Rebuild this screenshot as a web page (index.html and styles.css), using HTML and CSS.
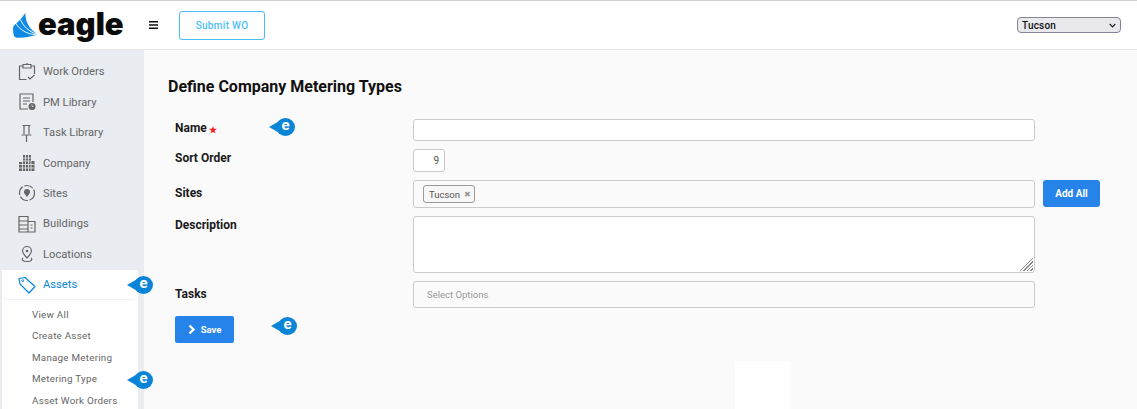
FILE: index.html
```html
<!DOCTYPE html>
<html lang="en">
<head>
<meta charset="utf-8">
<title>Define Company Metering Types</title>
<link rel="stylesheet" href="styles.css">
</head>
<body>
<header class="topbar">
  <div class="logo">
    <svg class="logo-mark" viewBox="0 0 25 25" width="25" height="25"><path d="M12.500 0C8 6 5 9 .5 13C-.3 16 0 20 1 23C2 24.500 4 25 6 24.800C13 24.500 19 23.500 25 21.500C17 17 12 9 12.500 0Z" fill="#0f8ae6"/><path d="M7.500 6.500C10 13 16 19 25 21.500" fill="none" stroke="#fff" stroke-width="1"/><path d="M3 10.500C6 16 14 22 25 21.800" fill="none" stroke="#fff" stroke-width=".9"/></svg>
    <span class="logo-text">eagle</span>
  </div>
  <svg class="burger" viewBox="0 0 9 8" width="9" height="8"><path d="M0 .75h9M0 4h9M0 7.250h9" stroke="#111" stroke-width="1.300"/></svg>
  <button class="submit-wo" type="button">Submit WO</button>
  <select class="site-select"><option>Tucson</option></select>
</header>
<div class="shell">
  <nav class="sidebar">
    <a class="nav-item">
      <svg class="nav-icon" viewBox="0 0 18 18"><path d="M5 3H1.500v13.500h7M13 3h3.500v8M5 1.500h8V5H5zM8 1.500c0-1 2-1 2 0M10 14l2 2 4.500-4" fill="none" stroke="#666" stroke-width="1.200"/></svg>
      <span>Work Orders</span>
    </a>
    <a class="nav-item">
      <svg class="nav-icon" viewBox="0 0 18 18"><path d="M10 16H2V1h13v8M5 5h7M5 8h7M5 11h4" fill="none" stroke="#666" stroke-width="1.200"/><circle cx="14" cy="13.500" r="3.500" fill="#666"/><path d="M14 11.500v2h1.500" fill="none" stroke="#e9ecf1" stroke-width=".8"/></svg>
      <span>PM Library</span>
    </a>
    <a class="nav-item">
      <svg class="nav-icon" viewBox="0 0 18 18"><path d="M4.500 1.500h8M6 1.500v8.500M11 1.500v8.500M3.500 11h10M8.500 11v7" fill="none" stroke="#666" stroke-width="1.200"/></svg>
      <span>Task Library</span>
    </a>
    <a class="nav-item">
      <svg class="nav-icon" viewBox="0 0 18 18"><path d="M5 1h8v6h3.500v10H1V8h4z" fill="#666"/><path d="M7.500 1v16M10.500 1v16M5 4h8M5 7h8M1 10.500h15.500M1 14h15.500M4.500 8v9M13 7v10" stroke="#e9ecf1" stroke-width=".8"/></svg>
      <span>Company</span>
    </a>
    <a class="nav-item">
      <svg class="nav-icon" viewBox="0 0 18 18"><circle cx="9" cy="9" r="7.500" fill="none" stroke="#666" stroke-width="1.200" stroke-dasharray="9 1.800"/><path d="M9 13C7.500 11 6 9.500 6 8a3 3 0 0 1 6 0c0 1.500-1.500 3-3 5z" fill="#666"/></svg>
      <span>Sites</span>
    </a>
    <a class="nav-item">
      <svg class="nav-icon" viewBox="0 0 18 18"><path d="M1 1.500h9V17H1zM10 6.500h7V17h-7zM1 6h9M1 10h9M1 14h9M12.500 10h2M12.500 13h2" fill="none" stroke="#666" stroke-width="1.200"/></svg>
      <span>Buildings</span>
    </a>
    <a class="nav-item">
      <svg class="nav-icon" viewBox="0 0 18 18"><path d="M9 13C7 10.500 4.500 8.500 4.500 6a4.500 4.500 0 0 1 9 0c0 2.500-2.500 4.500-4.500 7z" fill="none" stroke="#666" stroke-width="1.200"/><circle cx="9" cy="6" r="1.300" fill="#666"/><path d="M5 13c-2 2 0 3.500 4 3.500s6-1.500 4-3.500" fill="none" stroke="#666" stroke-width="1.200"/></svg>
      <span>Locations</span>
    </a>
    <div class="nav-group">
      <a class="nav-item nav-active">
        <svg class="nav-icon" viewBox="0 0 18 18"><path d="M1 2.500 7 1.500 17 10.500 11 17 2 8z" fill="none" stroke="#0a84d6" stroke-width="1.200" stroke-linejoin="round"/><circle cx="4.700" cy="4.700" r="1" fill="none" stroke="#0a84d6"/></svg>
        <span>Assets</span>
      </a>
      <ul class="sub-nav">
        <li>View All</li>
        <li>Create Asset</li>
        <li>Manage Metering</li>
        <li>Metering Type</li>
        <li>Asset Work Orders</li>
      </ul>
    </div>
    <span class="pin pin-assets">e</span>
    <span class="pin pin-type">e</span>
  </nav>
  <main class="content">
    <h1 class="title">Define Company Metering Types</h1>
    <form class="form">
      <label class="label label-name">Name <i class="req">★</i></label>
      <input class="field" type="text">
      <span></span>

      <label class="label label-sort">Sort Order</label>
      <input class="field field-num" type="text" value="9">
      <span></span>

      <label class="label label-sites">Sites</label>
      <div class="field field-box">
        <span class="chip">Tucson <b class="chip-x">✖</b></span>
      </div>
      <button class="btn-add" type="button">Add All</button>

      <label class="label label-desc">Description</label>
      <textarea class="field field-area"></textarea>
      <span></span>

      <label class="label label-tasks">Tasks</label>
      <div class="field field-box field-select">Select Options</div>
      <span></span>

      <button class="btn-save" type="button">
        <svg viewBox="0 0 8 10" width="8" height="11"><path d="M1.500 1 5.500 5l-4 4" fill="none" stroke="#fff" stroke-width="2.400"/></svg>
        Save
      </button>
    </form>
    <span class="pin pin-name">e</span>
    <span class="pin pin-save">e</span>
    <div class="white-box"></div>
  </main>
</div>
</body>
</html>
```
FILE: styles.css
```css
* { box-sizing: border-box; }
html, body { margin: 0; height: 409px; overflow: hidden; }
body { font-family: Roboto, "Liberation Sans", sans-serif; background: #fafafa; color: #111; }

.topbar {
  height: 50px;
  display: flex;
  align-items: center;
  background: #fff;
  border-top: 1px solid #cfcfcf;
  border-bottom: 1px solid #e6e6e6;
  padding: 0 16px 0 13px;
}
.logo { display: flex; align-items: flex-end; width: 136px; height: 26px; }
.logo-mark { flex: none; }
.logo-text {
  font-family: Inter, sans-serif;
  font-weight: 900;
  font-size: 31px;
  line-height: 26px;
  color: #0b0b0b;
  margin-bottom: 1px;
}
.burger { flex: none; margin-right: 21px; }
.submit-wo {
  width: 86px;
  height: 29px;
  background: #fff;
  border: 1px solid #45bdf5;
  border-radius: 3px;
  color: #4cc1f7;
  font: 500 10px Roboto, sans-serif;
  letter-spacing: .3px;
}
.site-select {
  margin-left: auto;
  width: 104px;
  height: 16px;
  padding: 0 0 0 4px;
  font: 500 10px Roboto, sans-serif;
  letter-spacing: .2px;
  color: #111;
  appearance: none;
  background: #e8e8ed url("data:image/svg+xml,%3Csvg xmlns='http://www.w3.org/2000/svg' width='7' height='5'%3E%3Cpath d='M.7 1 3.500 3.800 6.300 1' fill='none' stroke='%23222' stroke-width='1.200'/%3E%3C/svg%3E") no-repeat right 4px center;
  border: 1px solid #85859a;
  border-radius: 4px;
}

.shell { display: flex; height: 359px; overflow: hidden; }
.sidebar {
  position: relative;
  z-index: 1;
  width: 144px;
  flex: none;
  background: #e9ecf1;
  padding: 6.700px 6px 0 2px;
}
.nav-item {
  display: flex;
  align-items: center;
  height: 30.400px;
  padding-left: 16px;
  gap: 7px;
  font-size: 11.200px;
  color: #666;
}
.nav-icon { width: 18px; height: 18px; flex: none; }
.nav-group { background: #fff; height: 139px; margin-top: .7px; }
.nav-active { color: #0a84d6; height: 30px; border-bottom: 1px solid #eef0f4; border-radius: 0 0 6px 6px; }
.sub-nav { list-style: none; margin: 0; padding: 3.800px 0 0 30px; }
.sub-nav li {
  height: 21.500px;
  line-height: 21.500px;
  font-size: 9.800px;
  letter-spacing: .25px;
  color: #666;
}

.content { position: relative; flex: 1; padding: 27px 0 0 24px; background: #fafafa; }
.title { margin: 0 0 22px; font: 700 16px/20px Roboto, sans-serif; color: #111; }
.form {
  display: grid;
  grid-template-columns: 238px 622px 65px;
  row-gap: 8px;
  margin-left: 7px;
  align-items: start;
}
.label { font-size: 12px; font-weight: 700; color: #1a1a1a; line-height: 14px; }
.label-name { padding-top: 2px; }
.label-sort { padding-top: 2px; }
.label-sites { padding-top: 6px; }
.label-desc { padding-top: 2px; }
.label-tasks { padding-top: 6px; }
.req { font-style: normal; color: #f01f1f; font-size: 9px; vertical-align: -1px; margin-left: -1px; }
.field { display: block; width: 622px; border: 1px solid #cacaca; border-radius: 3px; background: #fff; }
input.field { height: 22px; }
.field-num { width: 32px; height: 23px !important; text-align: right; padding: 0 5px; font: 10px Roboto, sans-serif; color: #555; }
.field-box { height: 28px; background: #fafafa; display: flex; align-items: center; padding-left: 9px; }
.chip {
  display: inline-flex;
  align-items: center;
  gap: 4px;
  height: 18px;
  padding: 0 3px 0 5px;
  border: 1px solid #999;
  border-radius: 3px;
  background: #f7f7f7;
  font-size: 9.500px;
  color: #555;
}
.chip-x { font-size: 8px; color: #999; font-family: "DejaVu Sans", sans-serif; }
.field-area {
  height: 57px;
  resize: none;
  background: #fff linear-gradient(135deg,
    transparent 10px, #888 10px, #888 11px,
    transparent 11px, transparent 12.500px, #888 12.500px, #888 13.500px,
    transparent 13.500px, transparent 15px, #888 15px, #888 16px,
    transparent 16px, transparent 17.500px, #888 17.500px, #888 18.500px,
    transparent 18.500px) no-repeat right 1px bottom 1px / 14px 14px;
}
.field-select { height: 27px; padding-left: 13px; font-size: 9.500px; color: #999; }
.btn-add {
  width: 57px;
  height: 27px;
  margin-left: 8px;
  background: #2583ea;
  color: #fff;
  border: 0;
  border-radius: 3px;
  font: 700 10px Roboto, sans-serif;
}
.btn-save {
  display: flex;
  align-items: center;
  justify-content: center;
  gap: 5px;
  width: 59px;
  height: 27px;
  background: #2583ea;
  color: #fff;
  border: 0;
  border-radius: 2px;
  font: 700 9.500px Roboto, sans-serif;
}

.pin {
  position: absolute;
  z-index: 2;
  width: 19px;
  height: 18px;
  border-radius: 50%;
  background: #0a84d6;
  color: #fff;
  font: 700 15px/15px Roboto, sans-serif;
  text-align: center;
}
.pin::before {
  content: "";
  position: absolute;
  z-index: -1;
  left: -7px;
  top: 1px;
  width: 0;
  height: 0;
  border-top: 8px solid transparent;
  border-bottom: 8px solid transparent;
  border-right: 14px solid #0a84d6;
}
.pin-assets { left: 134px; top: 226px; }
.pin-type { left: 134px; top: 321px; }
.pin-name { left: 132px; top: 68px; }
.pin-save { left: 134px; top: 267px; }
.white-box { position: absolute; left: 591px; top: 311px; width: 56px; height: 48px; background: #fff; }
```
